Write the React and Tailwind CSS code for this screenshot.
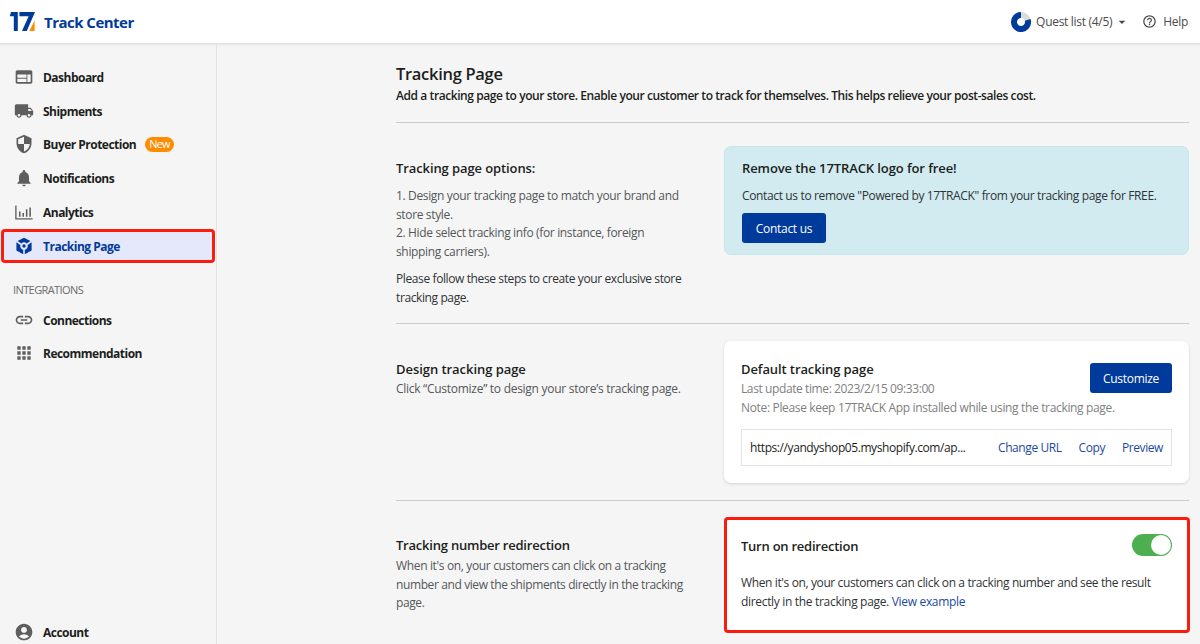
import {
  MdWeb,
  MdLocalShipping,
  MdSecurity,
  MdNotifications,
  MdLink,
  MdApps,
  MdAccountCircle,
  MdHelpOutline,
  MdArrowDropDown,
} from 'react-icons/md'

function AnalyticsIcon({ className }) {
  return (
    <svg viewBox="0 0 18 18" className={className} fill="none" stroke="currentColor">
      <path d="M1.7 3.2v12H16.8" strokeWidth="1.2" />
      <path d="M5.2 8.5v4.8M8.3 10v3.3M11.4 6.5v6.8M14.5 5v8.3" strokeWidth="1.4" />
    </svg>
  )
}

function TrackingIcon({ className }) {
  return (
    <svg viewBox="-1 -1 20 20" className={className} fill="currentColor">
      <path d="M9 .8 15.4 4.1 11.7 6.5A3.7 3.7 0 0 0 6.3 6.5L2.6 4.1Z" />
      <path d="M1.4 5.2 5.4 7.9A3.8 3.8 0 0 0 8.2 12.7V17.2L1.4 13.4Z" />
      <path d="M16.6 5.2 12.6 7.9A3.8 3.8 0 0 1 9.8 12.7V17.2L16.6 13.4Z" />
      <circle cx="9" cy="9" r="1.7" />
    </svg>
  )
}

function Logo() {
  return (
    <svg viewBox="0 0 26 20" className="h-5 w-[26px]">
      <path d="M2 0h6.8v19H4.8V4.2H.8Z" fill="#003a9b" />
      <path d="M10.4 0H26L17.8 19H13L19.6 4.2H10.4Z" fill="#003a9b" />
      <path d="M25.6 8.5V19H20.4Z" fill="#ff8c00" />
    </svg>
  )
}

const navItems = [
  { label: 'Dashboard', icon: MdWeb },
  { label: 'Shipments', icon: MdLocalShipping },
  { label: 'Buyer Protection', icon: MdSecurity, badge: 'New' },
  { label: 'Notifications', icon: MdNotifications },
  { label: 'Analytics', icon: AnalyticsIcon },
  { label: 'Tracking Page', icon: TrackingIcon, active: true },
]

const integrations = [
  { label: 'Connections', icon: MdLink },
  { label: 'Recommendation', icon: MdApps },
]

function NavItem({ label, icon: Icon, badge, active }) {
  return (
    <a
      className={
        active
          ? 'mx-px flex h-[33.8px] items-center rounded-[4px] border-[3px] border-[#fb1c10] bg-[#e5e8fa] pl-[10px] text-[#003a9b]'
          : 'flex h-[33.8px] items-center pl-[14px] text-[#5e5e5e]'
      }
    >
      <Icon className="size-5 shrink-0" />
      <span
        className={
          active
            ? 'ml-[9px] pt-[2px] text-[12px] font-bold tracking-[-0.5px]'
            : 'ml-[9px] pt-[2px] text-[12px] font-bold tracking-[-0.52px] text-[#1c1e20]'
        }
      >
        {label}
      </span>
      {badge && (
        <span className="ml-[9px] flex h-[15px] items-center rounded-full bg-[#ff8c00] px-1 text-[11px] tracking-[-0.8px] text-white">
          {badge}
        </span>
      )}
    </a>
  )
}

function Header() {
  return (
    <header className="flex h-[44px] shrink-0 items-center border-b border-[#e1e1e1] bg-white pl-[9px] pr-3 shadow-[0_1px_2px_rgba(0,0,0,0.06)]">
      <Logo />
      <span className="ml-[9px] pt-px text-[15px] font-bold tracking-[-0.52px] text-[#003a9b]">Track Center</span>
      <div className="ml-auto flex items-center text-[12px] tracking-[-0.3px] text-[#4a4a4a]">
        <svg viewBox="0 0 20 20" className="mr-[5px] size-5">
          <circle cx="10" cy="10" r="7" fill="none" stroke="#dcdcdc" strokeWidth="6" />
          <path d="M16.66 7.84A7 7 0 1 1 10 3" fill="none" stroke="#003a9b" strokeWidth="6" />
        </svg>
        <span>Quest list (4/5)</span>
        <MdArrowDropDown className="ml-[2px] size-4" />
        <MdHelpOutline className="ml-3 size-[15px]" />
        <span className="ml-[6px]">Help</span>
      </div>
    </header>
  )
}

function Sidebar() {
  return (
    <nav className="flex w-[217px] shrink-0 flex-col border-r border-[#e3e3e3] pt-4">
      {navItems.map((item) => (
        <NavItem key={item.label} {...item} />
      ))}
      <p className="mb-[5px] mt-[19px] pl-[13px] text-[11px] leading-4 tracking-[-0.6px] text-[#6b6b6b]">INTEGRATIONS</p>
      {integrations.map((item) => (
        <NavItem key={item.label} {...item} />
      ))}
      <div className="-mb-[5px] mt-auto">
        <NavItem label="Account" icon={MdAccountCircle} />
      </div>
    </nav>
  )
}

function Button({ children, className }) {
  return (
    <button className={`h-[30px] shrink-0 rounded-[3px] bg-[#003a9b] pt-px text-[12px] tracking-[-0.3px] text-white ${className}`}>
      {children}
    </button>
  )
}

function Section({ className, aside, children }) {
  return (
    <section className={`flex border-t border-[#c9cccf] ${className}`}>
      <div className="w-[328px] shrink-0">{aside}</div>
      <div className="w-[465px] shrink-0">{children}</div>
    </section>
  )
}

export default function App() {
  return (
    <div className="flex h-[644px] w-[1200px] flex-col overflow-hidden whitespace-nowrap bg-[#f5f5f5] font-['Open_Sans',sans-serif] text-[#1c1e20]">
      <Header />
      <div className="flex min-h-0 flex-1">
        <Sidebar />
        <main className="ml-[179px] w-[793px] shrink-0 pt-[18px]">
          <h1 className="text-[16.5px] font-semibold leading-6 tracking-[-0.3px]">Tracking Page</h1>
          <p className="text-[12px] font-semibold leading-5 tracking-[-0.42px]">
            Add a tracking page to your store. Enable your customer to track for themselves. This helps relieve your post-sales cost.
          </p>

          <Section
            className="mt-[16px] h-[201px] pt-[23px]"
            aside={
              <>
                <h2 className="mt-[12px] text-[13px] font-semibold leading-5 tracking-[-0.1px]">Tracking page options:</h2>
                <p className="mt-[9px] text-[12px] leading-[18.5px] tracking-[-0.35px] text-[#54575a]">
                  1. Design your tracking page to match your brand and
                  <br />
                  store style.
                  <br />
                  2. Hide select tracking info (for instance, foreign
                  <br />
                  shipping carriers).
                </p>
                <p className="mt-[9px] text-[12px] leading-[18.5px] tracking-[-0.39px] text-[#303335]">
                  Please follow these steps to create your exclusive store
                  <br />
                  tracking page.
                </p>
              </>
            }
          >
            <div className="h-[109px] rounded-[7px] border border-[#c6e8ec] bg-[#d1ebf0] pl-[17px] pt-[11px]">
              <h2 className="text-[13px] font-semibold leading-5 tracking-[-0.1px]">Remove the 17TRACK logo for free!</h2>
              <p className="mb-[7px] mt-[8px] text-[12px] leading-5 tracking-[-0.36px] text-[#303335]">
                Contact us to remove "Powered by 17TRACK" from your tracking page for FREE.
              </p>
              <Button className="w-[84px]">Contact us</Button>
            </div>
          </Section>

          <Section
            className="h-[177px] pt-[17px]"
            aside={
              <>
                <h2 className="mt-[18px] text-[13px] font-semibold leading-5 tracking-[-0.05px]">Design tracking page</h2>
                <p className="text-[12px] leading-5 tracking-[-0.28px] text-[#54575a]">
                  Click “Customize” to design your store’s tracking page.
                </p>
              </>
            }
          >
            <div className="h-[142px] rounded-[7px] bg-white px-[17px] pt-[18px] shadow-[0_1px_3px_rgba(0,0,0,0.14)]">
              <div className="flex justify-between">
                <div>
                  <h2 className="text-[13px] font-semibold leading-5 tracking-[-0.1px]">Default tracking page</h2>
                  <p className="pt-px text-[12px] leading-[18.5px] tracking-[-0.34px] text-[#808080]">
                    <span className="tracking-[-0.4px]">Last update time: 2023/2/15 09:33:00</span>
                    <br />
                    Note: Please keep 17TRACK App installed while using the tracking page.
                  </p>
                </div>
                <Button className="-ml-[60px] mt-1 w-[82px]">Customize</Button>
              </div>
              <div className="mt-[12px] flex h-[37px] items-center border border-[#e3e3e3] px-2 text-[12px] tracking-[-0.42px]">
                <span>https://yandyshop05.myshopify.com/ap...</span>
                <div className="ml-auto flex gap-[17px] text-[#1d489f]">
                  <a>Change URL</a>
                  <a>Copy</a>
                  <a>Preview</a>
                </div>
              </div>
            </div>
          </Section>

          <Section
            className="pt-[16px]"
            aside={
              <>
                <h2 className="mt-[18px] text-[13px] font-semibold leading-5 tracking-[-0.22px]">Tracking number redirection</h2>
                <p className="pt-[2px] text-[12px] leading-[18.5px] tracking-[-0.39px] text-[#54575a]">
                  <span className="tracking-[-0.35px]">When it's on, your customers can click on a tracking</span>
                  <br />
                  number and view the shipments directly in the tracking
                  <br />
                  page.
                </p>
              </>
            }
          >
            <div className="h-[116px] w-[466px] rounded-[4px] border-[3px] border-[#fb1c10] bg-white pl-[14px] pr-[15px] pt-[13px]">
              <div className="flex h-[24px] items-center justify-between">
                <h2 className="pt-[3px] text-[13px] font-semibold tracking-[-0.24px]">Turn on redirection</h2>
                <div className="flex h-[22px] w-[40px] justify-end rounded-full bg-[#4caf50] p-px">
                  <div className="size-5 rounded-full bg-white" />
                </div>
              </div>
              <p className="mt-[17px] text-[12px] leading-[18.5px] tracking-[-0.38px] text-[#303335]">
                When it's on, your customers can click on a tracking number and see the result
                <br />
                <span className="tracking-[-0.32px]">
                  directly in the tracking page. <a className="text-[#1d489f]">View example</a>
                </span>
              </p>
            </div>
          </Section>
        </main>
      </div>
    </div>
  )
}
